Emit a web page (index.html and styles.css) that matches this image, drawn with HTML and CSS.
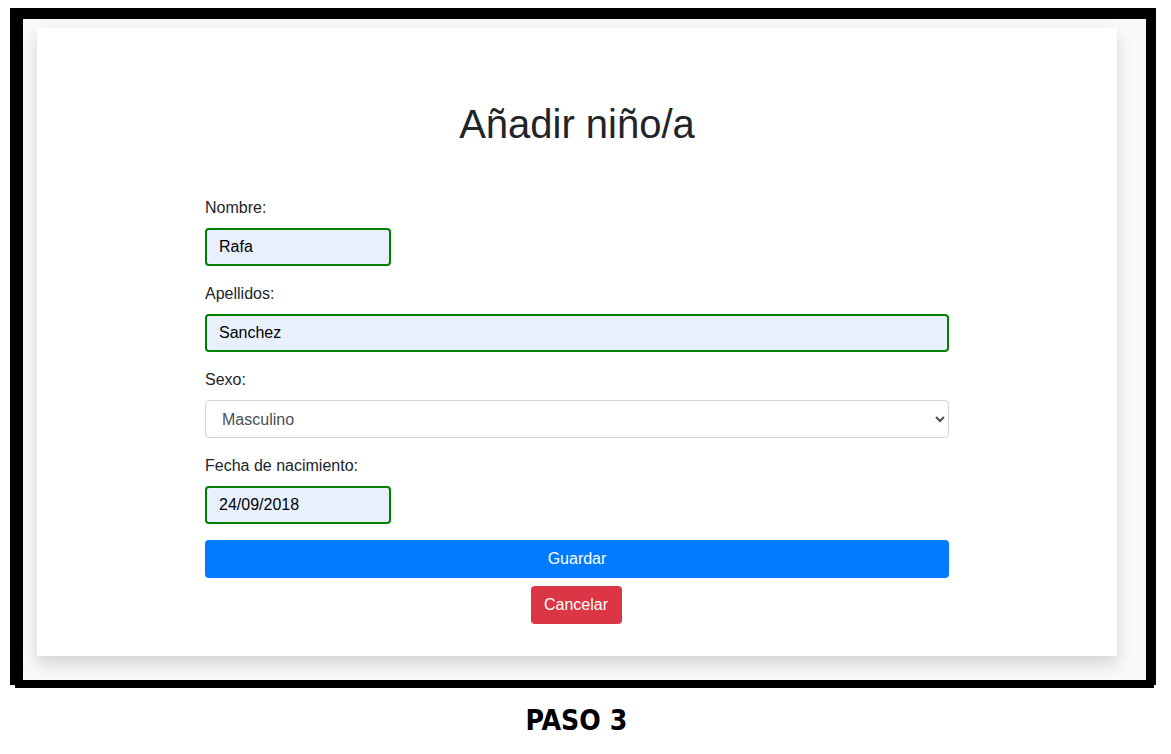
FILE: index.html
```html
<!DOCTYPE html>
<html lang="es">
<head>
<meta charset="utf-8">
<title>Añadir niño/a</title>
<link rel="stylesheet" href="styles.css">
</head>
<body>
<div class="frame">
  <div class="stage">
    <div class="card">
      <h1 class="title">Añadir niño/a</h1>
      <form class="form">
        <div class="group">
          <label class="label" for="nombre">Nombre:</label>
          <input class="input input-short filled" id="nombre" type="text" value="Rafa">
        </div>
        <div class="group">
          <label class="label" for="apellidos">Apellidos:</label>
          <input class="input filled" id="apellidos" type="text" value="Sanchez">
        </div>
        <div class="group">
          <label class="label" for="sexo">Sexo:</label>
          <select class="input select" id="sexo">
            <option selected>Masculino</option>
            <option>Femenino</option>
          </select>
        </div>
        <div class="group">
          <label class="label" for="fecha">Fecha de nacimiento:</label>
          <input class="input input-short filled" id="fecha" type="text" value="24/09/2018">
        </div>
        <button class="btn btn-primary" type="button">Guardar</button>
        <div class="cancel-row">
          <button class="btn btn-danger" type="button">Cancelar</button>
        </div>
      </form>
    </div>
  </div>
</div>
<div class="caption"><span class="caption-text">PASO 3</span></div>
</body>
</html>
```

FILE: styles.css
```css
* { box-sizing: border-box; }

body {
  margin: 0;
  background: #fff;
  font-family: "Liberation Sans", Arial, sans-serif;
  color: #212529;
}

.frame {
  position: relative;
  margin: 8px 0 0 10px;
  width: 1146px;
  height: 677px;
  border-style: solid;
  border-color: #000;
  border-width: 11px 10px 5px 13px;
}

.frame::after {
  content: "";
  position: absolute;
  left: -8px;
  bottom: -8px;
  width: 1139px;
  height: 8px;
  background: #000;
}

.stage {
  height: 100%;
  background: #f8f9fa;
  padding: 9px 29px 24px 14px;
}

.card {
  height: 628px;
  background: #fff;
  box-shadow: 0 8px 16px rgba(0, 0, 0, 0.15);
  padding: 72px 168px 0 168px;
}

.title {
  margin: 0 0 48px 0;
  font-size: 40px;
  font-weight: 400;
  line-height: 48px;
  text-align: center;
  color: #212529;
}

.form {
  display: flex;
  flex-direction: column;
}

.group {
  display: flex;
  flex-direction: column;
  align-items: flex-start;
  margin-bottom: 16px;
}

.label {
  font-size: 16px;
  line-height: 24px;
  margin-bottom: 8px;
}

.input {
  width: 100%;
  height: 38px;
  font-family: "Liberation Sans", Arial, sans-serif;
  font-size: 16px;
  border-radius: 4px;
  outline: none;
}

.filled {
  border: 2px solid #008000;
  background: #e8f0fe;
  color: #000;
  padding: 0 12px;
}

.input-short {
  width: 186px;
}

.select {
  border: 1px solid #ced4da;
  background: #fff;
  color: #495057;
  padding: 0 12px;
}

.btn {
  height: 38px;
  border: 0;
  border-radius: 4px;
  font-family: "Liberation Sans", Arial, sans-serif;
  font-size: 16px;
  color: #fff;
  padding: 0 12px;
}

.btn-primary {
  width: 100%;
  background: #007bff;
}

.cancel-row {
  display: flex;
  justify-content: center;
  margin-top: 8px;
  padding-right: 2px;
}

.btn-danger {
  background: #dc3545;
  width: 91px;
}

.caption {
  margin: 17px 0 0 0;
  padding-right: 19px;
  text-align: center;
  line-height: 36px;
}

.caption-text {
  display: inline-block;
  font-family: "DejaVu Sans Condensed", "DejaVu Sans", sans-serif;
  font-stretch: condensed;
  font-weight: 700;
  font-size: 29px;
  letter-spacing: 0;
  color: #000;
  transform: scaleX(0.97);
}
```
